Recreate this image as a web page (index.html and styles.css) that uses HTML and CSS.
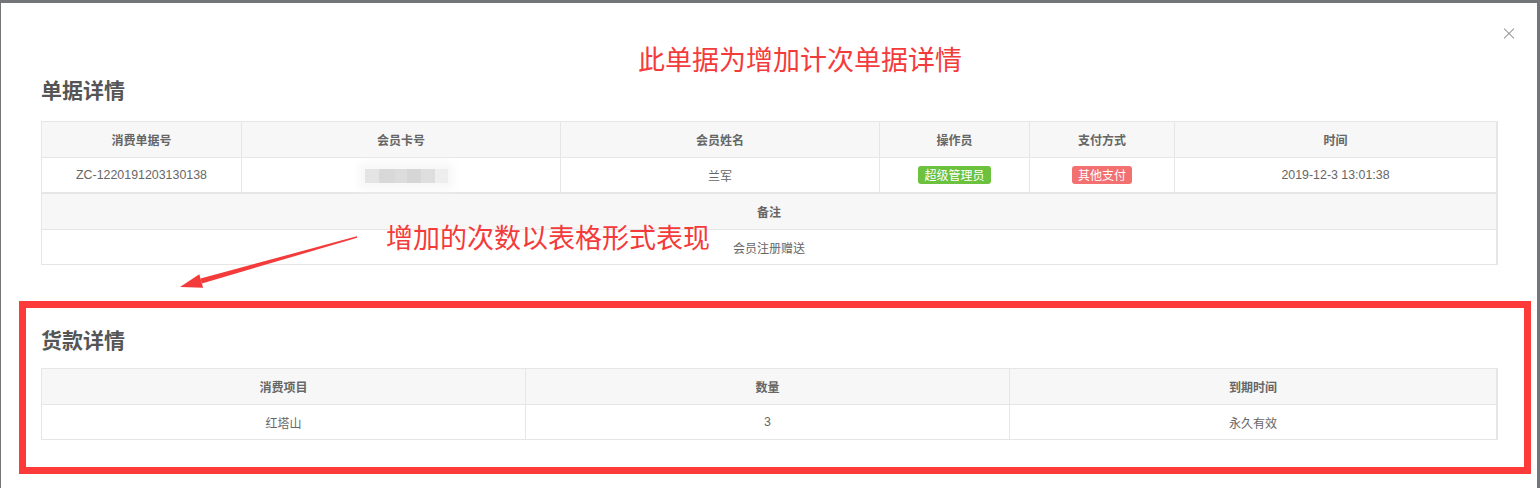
FILE: index.html
```html
<!DOCTYPE html>
<html lang="zh-CN">
<head>
  <meta charset="UTF-8">
  <title>单据详情</title>
  <link rel="stylesheet" href="styles.css">
</head>
<body>
  <div class="modal">
    <span class="close"></span>
    <div class="notice">此单据为增加计次单据详情</div>

    <div class="section">
      <h3 class="sec-title">单据详情</h3>
      <div class="grid cols-6">
        <div class="th">消费单据号</div>
        <div class="th">会员卡号</div>
        <div class="th">会员姓名</div>
        <div class="th">操作员</div>
        <div class="th">支付方式</div>
        <div class="th">时间</div>
        <div class="td num">ZC-1220191203130138</div>
        <div class="td"><span class="blur"></span></div>
        <div class="td">兰军</div>
        <div class="td"><span class="tag tag-green">超级管理员</span></div>
        <div class="td"><span class="tag tag-red">其他支付</span></div>
        <div class="td num">2019-12-3 13:01:38</div>
      </div>
      <div class="grid cols-1">
        <div class="th">备注</div>
        <div class="td">会员注册赠送</div>
      </div>
    </div>

    <div class="mark-box">
      <h3 class="sec-title">货款详情</h3>
      <div class="grid cols-3">
        <div class="th">消费项目</div>
        <div class="th">数量</div>
        <div class="th">到期时间</div>
        <div class="td">红塔山</div>
        <div class="td num">3</div>
        <div class="td">永久有效</div>
      </div>
    </div>

    <div class="note">增加的次数以表格形式表现</div>
    <svg class="arrow" width="1536" height="485" viewBox="0 0 1536 485">
      <g transform="translate(-1,-3)" fill="#f43b3b">
        <polygon points="357.2,237.8 356.8,236.2 200.5,278.6 201.9,283.4"/>
        <polygon points="180,287 199.3,274.3 203.1,287.7"/>
      </g>
    </svg>
  </div>
</body>
</html>
```

FILE: styles.css
```css
html, body { margin: 0; padding: 0; }
body { background: #737578; font-family: "Noto Sans CJK SC", "Noto Sans", sans-serif; color: #666; overflow: hidden; }

.modal { position: relative; background: #fff; margin: 3px 3px 0 1px; height: 485px; overflow: hidden; }
.close { position: absolute; left: 1503px; top: 25px; width: 10px; height: 10px; }
.close::before, .close::after { content: ""; position: absolute; left: -2px; top: 4.5px; width: 14px; height: 1px; background: #999; transform: rotate(45deg); }
.close::after { transform: rotate(-45deg); }

.notice { margin: 0; padding-top: 42px; padding-left: 637px; font-size: 27px; line-height: 28px; color: #f43b3b; }

.section { padding-left: 40px; }
.sec-title { margin: 4px 0 0 0; font-size: 21px; line-height: 24px; font-weight: bold; color: #555; }
.section .grid:first-of-type { margin-top: 20px; }

.grid { display: grid; width: 1457px; box-sizing: border-box; border-top: 1px solid #e6e6e6; border-left: 1px solid #e6e6e6; border-right: 2px solid #e6e6e6; font-size: 12px; }
.cols-6 { grid-template-columns: 200px 319px 319px 150px 145px 1fr; }
.cols-3 { grid-template-columns: 484px 484px 1fr; }
.cols-1 { grid-template-columns: 1fr; }

.th, .td { display: flex; align-items: center; justify-content: center; box-sizing: border-box; border-right: 1px solid #e6e6e6; border-bottom: 1px solid #e6e6e6; }
.grid > div:last-child, .cols-6 .th:nth-child(6), .cols-3 .th:nth-child(3), .cols-1 .th { border-right: none; }
.th { height: 36px; background: #f7f7f7; font-weight: bold; color: #666; }
.td { height: 35px; color: #666; }
.num { font-family: "Liberation Sans", "Noto Sans CJK SC", sans-serif; font-size: 12.4px; }

.tag { display: inline-block; height: 18px; line-height: 18px; padding: 0 6px; border-radius: 3px; color: #fff; font-size: 12px; }
.tag-green { background: #6cc13f; }
.tag-red { background: #f27070; }

.blur { display: inline-block; width: 83px; height: 14px; margin-left: 10px; margin-top: 1px; background: linear-gradient(to right, #e4e4e4 0 14px, #d8d8d8 14px 30px, #dcdcdc 30px 42px, #d6d6d6 42px 56px, #dedede 56px 70px, #eeeeee 70px); box-shadow: 0 0 10px 6px #f7f7f7; }

.mark-box { margin: 36px 6px 0 18px; border: 7px solid #fc3a3a; padding: 19px 25px 27px 15px; }
.mark-box .sec-title { margin-top: 0; }
.mark-box .grid { margin-top: 17px; }

.note { position: absolute; left: 385px; top: 220px; font-size: 27px; line-height: 28px; color: #f43b3b; }
.arrow { position: absolute; left: 0; top: 0; pointer-events: none; }
```
